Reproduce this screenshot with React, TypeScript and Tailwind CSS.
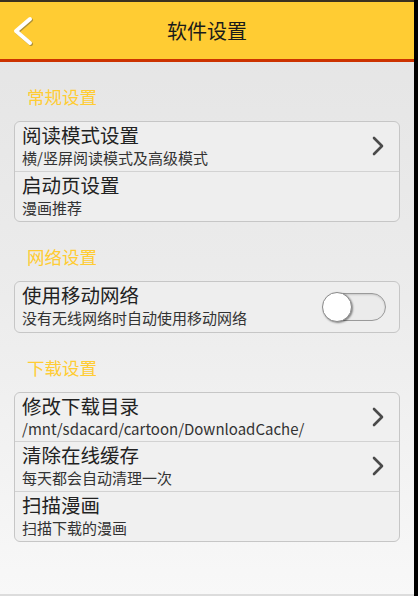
import React from "react";

const font = { fontFamily: '"Noto Sans CJK SC", "Noto Sans", sans-serif' };

function Chevron() {
  return (
    <svg width="14" height="22" viewBox="0 0 14 22" className="shrink-0">
      <path d="M3 3 L11 11 L3 19" fill="none" stroke="#4a4a4a" strokeWidth="2.6" strokeLinecap="round" strokeLinejoin="round" />
    </svg>
  );
}

function Toggle() {
  return (
    <div className="relative w-[64px] h-[30px] shrink-0 -mr-[1px]">
      <div className="absolute left-[4px] right-0 top-[1px] bottom-[1px] rounded-full border border-[#9a9a9a] bg-[#ebebeb] shadow-[inset_0_1px_2px_rgba(0,0,0,0.15)]" />
      <div className="absolute left-0 top-0 w-[30px] h-[30px] rounded-full bg-white border border-[#8a8a8a] shadow-[1px_1px_2px_rgba(0,0,0,0.45)]" />
    </div>
  );
}

interface RowProps {
  title: string;
  sub: string;
  right?: React.ReactNode;
  last?: boolean;
}

function Row({ title, sub, right, last }: RowProps) {
  return (
    <div className={`flex items-center h-[49.5px] pl-[7px] pr-[14px] ${last ? "" : "border-b border-[#d2d2d2]"}`}>
      <div className="flex-1 flex flex-col self-start pt-[1px]">
        <div className="text-[19.5px] leading-[24px] h-[24px] text-[#222]">{title}</div>
        <div className="text-[15px] leading-[20px] h-[20px] mt-[1px] text-[#333] whitespace-nowrap">{sub}</div>
      </div>
      {right}
    </div>
  );
}

function Section({ label }: { label: string }) {
  return (
    <div className="pl-[27px] h-[59px] pt-[24px] text-[17.5px] leading-[22px] text-[#ffcc33]">{label}</div>
  );
}

export default function App() {
  return (
    <div className="w-[418px] h-[596px] flex bg-black overflow-hidden" style={font}>
      <div className="w-[414px] h-full flex flex-col bg-gradient-to-b from-[#e4e4e4] via-[#ececec] to-[#f8f8f8]">
        <div className="h-[2px] bg-[#3a3020]" />
        <div className="h-[57px] bg-[#ffcc33] relative flex items-center justify-center">
          <svg width="24" height="30" viewBox="0 0 24 30" className="absolute left-[11px] top-[14px]">
            <path d="M19 3 L5 15 L19 27" fill="none" stroke="#7a6a3a" strokeWidth="4" strokeLinecap="round" strokeLinejoin="round" transform="translate(1 1)" opacity="0.6" />
            <path d="M19 3 L5 15 L19 27" fill="none" stroke="#ffffff" strokeWidth="4" strokeLinecap="round" strokeLinejoin="round" />
          </svg>
          <div className="text-[20px] leading-[26px] text-[#1a1a1a]">软件设置</div>
        </div>
        <div className="h-[3px] bg-[#cc3300]" />

        <div className="flex flex-col">
          <Section label="常规设置" />
          <div className="mx-[14px] rounded-[6px] border border-[#c6c6c6] bg-[#eeeeee]">
            <Row title="阅读模式设置" sub="横/竖屏阅读模式及高级模式" right={<Chevron />} />
            <Row title="启动页设置" sub="漫画推荐" last />
          </div>

          <Section label="网络设置" />
          <div className="mx-[14px] rounded-[6px] border border-[#c6c6c6] bg-[#eeeeee]">
            <Row title="使用移动网络" sub="没有无线网络时自动使用移动网络" right={<Toggle />} last />
          </div>

          <Section label="下载设置" />
          <div className="mx-[14px] rounded-[6px] border border-[#c6c6c6] bg-[#f0f0f0]">
            <Row title="修改下载目录" sub="/mnt/sdacard/cartoon/DownloadCache/" right={<Chevron />} />
            <Row title="清除在线缓存" sub="每天都会自动清理一次" right={<Chevron />} />
            <Row title="扫描漫画" sub="扫描下载的漫画" last />
          </div>
        </div>
        <div className="flex-1" />
        <div className="h-[2px] bg-[#dcdcdc]" />
      </div>
    </div>
  );
}
